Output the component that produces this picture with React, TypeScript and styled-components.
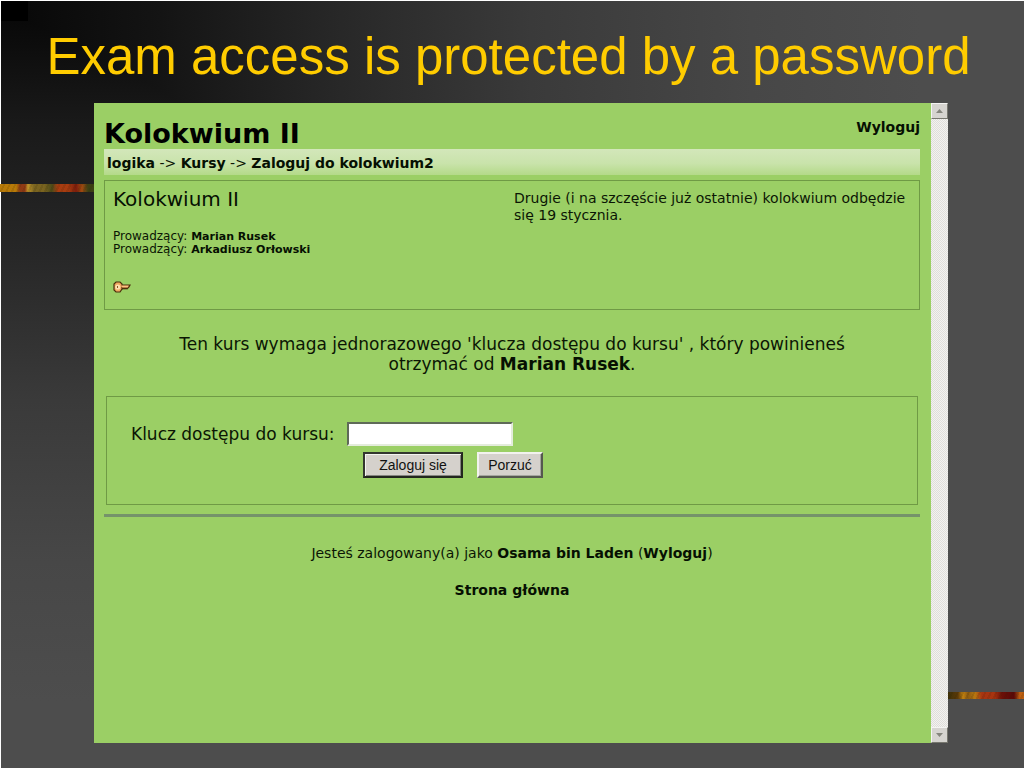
import React from 'react';
import styled, { createGlobalStyle } from 'styled-components';

const GlobalStyle = createGlobalStyle`
  *, *::before, *::after { box-sizing: border-box; }
  body { margin: 0; background: #fff; }
`;

const Slide = styled.main`
  min-height: 100vh;
  display: grid;
  grid-template-columns: 93px minmax(0, 1fr) 76px;
  grid-template-rows: 102px minmax(640px, 1fr) 25px;
  border: solid #fff;
  border-width: 1px 0 0 1px;
  background-color: #000;
  background-image:
    linear-gradient(to right, #000 0 27px, #090909 27px, #141414 160px, #272727 330px, #3a3a3a 530px, #474747 750px, #4d4d4d 920px),
    linear-gradient(to bottom, #000 0 20px, #090909 20px, #191919 120px, #272727 250px, #3a3a3a 400px, #474747 560px, #4d4d4d 700px);
  background-blend-mode: lighten;
`;

const SlideTitle = styled.h1`
  grid-column: 1 / -1;
  margin: 0;
  padding: 26px 8px 0 0;
  font: 400 51px/60px "Liberation Sans", Arial, sans-serif;
  color: #fc0;
  text-align: center;
  white-space: nowrap;
`;

const Ribbon = styled.div<{ $side: 'left' | 'right' }>`
  grid-row: 2;
  grid-column: ${p => (p.$side === 'left' ? 1 : 3)};
  align-self: ${p => (p.$side === 'left' ? 'start' : 'end')};
  margin: ${p => (p.$side === 'left' ? '81px 0 0 -1px' : '0 0 44px')};
  height: ${p => (p.$side === 'left' ? 8 : 7)}px;
  background:
    repeating-linear-gradient(115deg, transparent 0 3px, rgba(40, 30, 0, 0.12) 3px 5px),
    ${p =>
      p.$side === 'left'
        ? 'linear-gradient(to right, #b87a08 0 16px, #8f3a14 20px 25px, #c0962a 28px, #7a6420 34px 44px, #4c4a18 52px, #a83c10 58px 68px, #7c1c0c 76px, #a04a10 82px, #3c4014 88px)'
        : 'linear-gradient(to right, #3c3008 0, #5c3a08 10px, #c08010 15px, #8c5a10 20px, #b87810 27px, #a83410 34px 46px, #6c1008 54px, #5a0808 66px, #c06010 72px)'};
`;

const Browser = styled.section`
  grid-row: 2;
  grid-column: 2;
  display: flex;
  background: #9bcf65;
  color: #0b1604;
  font: 14px/17px "DejaVu Sans", Verdana, sans-serif;
`;

const Page = styled.div`
  flex: 1;
  min-width: 0;
  padding: 16px 11px 0 10px;
`;

const Link = styled.a`
  color: #061002;
  font-weight: 700;
  text-decoration: none;
`;

const Header = styled.header`
  display: flex;
  justify-content: space-between;
  height: 30px;
`;

const PageTitle = styled.h2`
  margin: 0;
  font-size: 27px;
  line-height: 30px;
  color: #000;
`;

const Breadcrumb = styled.nav`
  height: 26px;
  padding: 0 3px;
  background: linear-gradient(#d3e7ba, #c9e3ab 55%, #b4da89);
  line-height: 28px;
  white-space: nowrap;
`;

const Card = styled.section`
  display: flex;
  justify-content: space-between;
  margin-top: 5px;
  height: 130px;
  padding: 8px;
  border: 1px solid #6f9a45;
`;

const CourseTitle = styled.h3`
  margin: 0 0 20px;
  font-size: 20px;
  font-weight: 400;
  line-height: 21px;
  color: #061002;
`;

const Teacher = styled.p`
  margin: 0;
  font-size: 12px;
  line-height: 13px;

  ${Link} {
    font-size: 11px;
  }
`;

const KeyIcon = styled.svg`
  display: block;
  margin-top: 25px;
`;

const Summary = styled.p`
  width: 50%;
  margin: 1px 0 0;
  padding-left: 2px;
  padding-right: 4px;
`;

const Notice = styled.p`
  margin: 24px 0 22px;
  padding: 0 56px;
  font-size: 17px;
  line-height: 20px;
  text-align: center;
`;

const LoginForm = styled.form`
  display: grid;
  grid-template-columns: 216px 1fr;
  align-content: start;
  row-gap: 6px;
  height: 109px;
  margin: 0 2px 9px;
  padding: 25px 24px;
  border: 1px solid #6f9a45;
`;

const Label = styled.label`
  font-size: 17px;
  line-height: 24px;
  white-space: nowrap;
`;

const KeyInput = styled.input`
  width: 166px;
  height: 24px;
  padding: 2px 4px;
  border: 2px solid;
  border-color: #5f6a58 #e4ecdc #e4ecdc #5f6a58;
  background: #fff;
`;

const Actions = styled.div`
  grid-column: 2;
  display: flex;
  gap: 14px;
  padding-left: 16px;
`;

const Button = styled.button<{ $primary?: boolean }>`
  width: ${p => (p.$primary ? 100 : 66)}px;
  height: 26px;
  padding: 0;
  border: 2px solid;
  border-color: ${p => (p.$primary ? '#33372f #22261e #22261e #33372f' : '#f2f2ee #55584f #55584f #f2f2ee')};
  box-shadow: ${p => (p.$primary ? 'inset 1px 1px #f4f4f0, inset -1px -1px #858580' : 'inset -1px -1px #a5a59f')};
  background: #d5d1cc;
  color: #111;
  font: 14px/20px "Liberation Sans", Arial, sans-serif;
`;

const Divider = styled.hr`
  margin: 0;
  height: 3px;
  border: 0;
  background: #75936a;
`;

const Footer = styled.footer`
  padding-top: 28px;
  text-align: center;
`;

const FooterLine = styled.p`
  margin: 0 0 20px;
`;

const Scrollbar = styled.div`
  width: 17px;
  display: flex;
  flex-direction: column;
  justify-content: space-between;
  background: repeating-conic-gradient(#f3f2f0 0 25%, #dfdeda 0 50%) 0 0 / 2px 2px;
`;

const ScrollButton = styled.button`
  display: grid;
  place-items: center;
  width: 17px;
  height: 16px;
  padding: 0;
  border: 1px solid;
  border-color: #f4f4f2 #77776f #77776f #f4f4f2;
  background: #d6d4d0;
`;

function Arrow({ down }: { down?: boolean }) {
  return (
    <svg width="9" height="6" viewBox="0 0 9 6" aria-hidden="true">
      <path d={down ? 'M1 1h7L4.500 5z' : 'M1 5h7L4.500 1z'} fill="#85857d" />
    </svg>
  );
}

function Key() {
  return (
    <KeyIcon width="18" height="12" viewBox="0 0 18 12" role="img" aria-label="Klucz dostępu">
      <path
        d="M3 1h4l2 2v1h8l-1 2-2 2-1-1-1 1-1-1-1 1-1-1v1L7 11H3L1 9V3z"
        fill="#f0a860"
        stroke="#4a2e0c"
        strokeWidth="1.200"
      />
      <path d="M9 5.300h6" stroke="#ffc890" />
      <circle cx="4.800" cy="6" r="2.600" fill="#ffe0b0" />
      <path d="M4 5h1v2H4z" fill="#8a5a24" />
    </KeyIcon>
  );
}

export default function App() {
  return (
    <>
      <GlobalStyle />
      <Slide>
        <SlideTitle>Exam access is protected by a password</SlideTitle>
        <Ribbon $side="left" />
        <Browser>
          <Page>
            <Header>
              <PageTitle>Kolokwium II</PageTitle>
              <Link href="#wyloguj">Wyloguj</Link>
            </Header>
            <Breadcrumb>
              <Link href="#logika">logika</Link> -&gt; <Link href="#kursy">Kursy</Link> -&gt;{' '}
              <Link as="b">Zaloguj do kolokwium2</Link>
            </Breadcrumb>
            <Card>
              <div>
                <CourseTitle>Kolokwium II</CourseTitle>
                <Teacher>
                  Prowadzący: <Link href="#rusek">Marian Rusek</Link>
                </Teacher>
                <Teacher>
                  Prowadzący: <Link href="#orlowski">Arkadiusz Orłowski</Link>
                </Teacher>
                <Key />
              </div>
              <Summary>Drugie (i na szczęście już ostatnie) kolokwium odbędzie się 19 stycznia.</Summary>
            </Card>
            <Notice>
              Ten kurs wymaga jednorazowego 'klucza dostępu do kursu' , który powinieneś otrzymać od{' '}
              <Link href="#rusek">Marian Rusek</Link>.
            </Notice>
            <LoginForm onSubmit={e => e.preventDefault()}>
              <Label htmlFor="course-key">Klucz dostępu do kursu:</Label>
              <KeyInput id="course-key" type="password" />
              <Actions>
                <Button type="submit" $primary>
                  Zaloguj się
                </Button>
                <Button type="button">Porzuć</Button>
              </Actions>
            </LoginForm>
            <Divider />
            <Footer>
              <FooterLine>
                Jesteś zalogowany(a) jako <Link href="#profil">Osama bin Laden</Link> (
                <Link href="#wyloguj">Wyloguj</Link>)
              </FooterLine>
              <FooterLine>
                <Link href="#strona">Strona główna</Link>
              </FooterLine>
            </Footer>
          </Page>
          <Scrollbar>
            <ScrollButton type="button" aria-label="W górę">
              <Arrow />
            </ScrollButton>
            <ScrollButton type="button" aria-label="W dół">
              <Arrow down />
            </ScrollButton>
          </Scrollbar>
        </Browser>
        <Ribbon $side="right" />
      </Slide>
    </>
  );
}
